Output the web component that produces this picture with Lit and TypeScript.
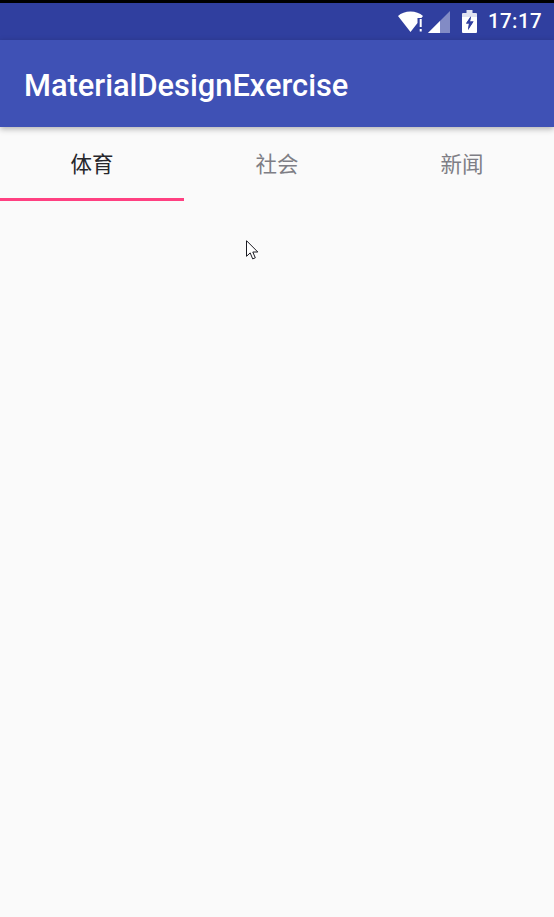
import { html, css, LitElement } from 'lit';
import { customElement, state } from 'lit/decorators.js';

@customElement('app-root')
export class AppRoot extends LitElement {
  static styles = css`
    :host {
      display: block;
      position: relative;
      height: 917px;
      overflow: hidden;
      background: #fafafa;
      font-family: Roboto, "Noto Sans CJK SC", sans-serif;
    }
    .status {
      height: 37px;
      border-top: 3px solid #000;
      background: #303f9f;
      display: flex;
      align-items: center;
      justify-content: flex-end;
      padding-right: 12px;
      color: #fff;
    }
    .status svg {
      display: block;
    }
    .wifi {
      margin-right: 5px;
    }
    .signal {
      margin-right: 12px;
    }
    .battery {
      margin-right: 11px;
    }
    .time {
      font-size: 20.5px;
      font-weight: 500;
      letter-spacing: 0.4px;
      line-height: 37px;
    }
    .toolbar {
      position: relative;
      height: 87px;
      box-sizing: border-box;
      padding: 3px 0 0 24px;
      background: #3f51b5;
      box-shadow: 0 2px 6px rgba(0, 0, 0, 0.3);
      display: flex;
      align-items: center;
      color: #fff;
      font-size: 30.8px;
      font-weight: 500;
    }
    .tabs {
      display: grid;
      grid-template-columns: 184px 186px 184px;
      height: 74px;
    }
    .tab {
      display: flex;
      align-items: center;
      justify-content: center;
      padding-bottom: 1px;
      box-sizing: border-box;
      border-bottom: 3px solid transparent;
      font-size: 21.5px;
      font-weight: 400;
      color: #7e7e85;
      cursor: pointer;
    }
    .tab.on {
      color: #26262b;
      border-bottom-color: #ff4081;
    }
    .cursor {
      position: absolute;
      left: 246px;
      top: 240px;
    }
  `;

  @state() tabs = ['体育', '社会', '新闻'];
  @state() active = 0;

  render() {
    return html`
      <div class="status">
        <svg class="wifi" width="25" height="21" viewBox="0 0 25 21">
          <path d="M0 5C3.200 2 7.500 .5 12.500 .5S21.800 2 25 5L23.400 7H19.500V12L12.500 21z" fill="#fff"/>
          <path d="M21.700 8h2v8h-2zM21.700 18h2v2.500h-2z" fill="#fff"/>
        </svg>
        <svg class="signal" width="22" height="22" viewBox="0 0 22 22">
          <path d="M22 0v22H0z" fill="#fff" fill-opacity=".4"/>
          <path d="M12 10v12H0z" fill="#fff"/>
        </svg>
        <svg class="battery" width="15" height="23" viewBox="0 0 15 23">
          <path d="M4.500 0h6v3H14a1 1 0 0 1 1 1v3H0V4a1 1 0 0 1 1-1h3.500z" fill="#fff" fill-opacity=".85"/>
          <path fill-rule="evenodd" d="M0 7h15v15a1 1 0 0 1-1 1H1a1 1 0 0 1-1-1zM9 6 4 13.500h3L6 20l5.500-8.500H8z" fill="#fff"/>
          <path d="M9 6 4 13.500h3L6 20l5.500-8.500H8z" fill="#303f9f"/>
        </svg>
        <span class="time">17:17</span>
      </div>
      <div class="toolbar">MaterialDesignExercise</div>
      <div class="tabs">
        ${this.tabs.map(
          (t, i) => html`<div class="tab ${i === this.active ? 'on' : ''}" @click=${() => (this.active = i)}>${t}</div>`
        )}
      </div>
      <svg class="cursor" width="14" height="21" viewBox="0 0 14 21">
        <path d="M.5.700v15.600l3.700-3.400 2.500 6 2.600-1.100-2.500-5.800h5z" fill="#fff" stroke="#1a1a22" stroke-width="1"/>
      </svg>
    `;
  }
}
